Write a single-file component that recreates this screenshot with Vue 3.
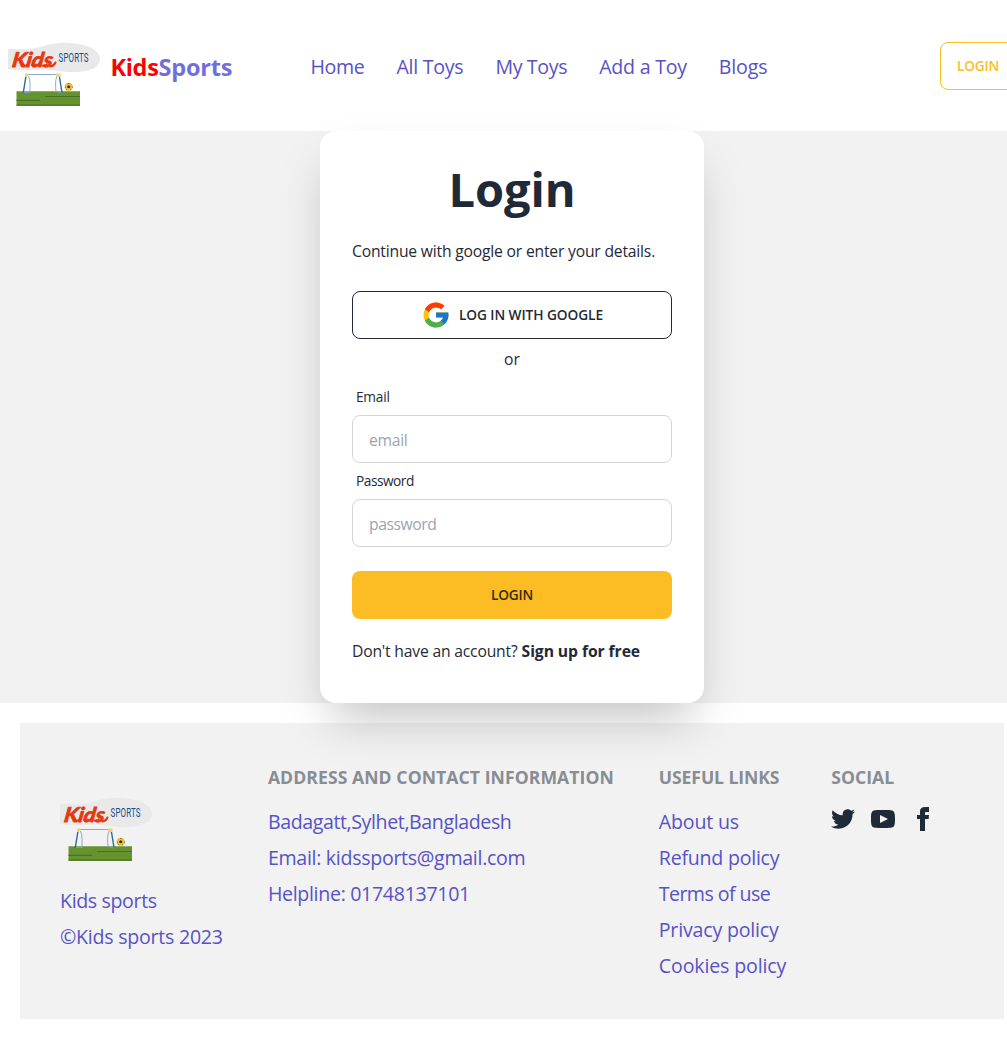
<script setup>
import { h } from 'vue'

const nav = [
  { text: 'Home', track: -0.36 },
  { text: 'All Toys', track: -0.27 },
  { text: 'My Toys', track: -0.35 },
  { text: 'Add a Toy', track: -0.25 },
  { text: 'Blogs', track: -0.15 }
]
const contact = [
  { text: 'Badagatt,Sylhet,Bangladesh', track: -0.4 },
  { text: 'Email: kidssports@gmail.com', track: -0.3 },
  { text: 'Helpline: 01748137101', track: -0.32 }
]
const links = [
  { text: 'About us', track: -0.19 },
  { text: 'Refund policy', track: -0.24 },
  { text: 'Terms of use', track: -0.57 },
  { text: 'Privacy policy', track: -0.2 },
  { text: 'Cookies policy', track: -0.14 }
]
const fields = [
  { label: 'Email', type: 'email', placeholder: 'email', labelTrack: -0.24, track: -0.294 },
  { label: 'Password', type: 'password', placeholder: 'password', labelTrack: -0.48, track: -0.421 }
]
const spacing = (n) => ({ letterSpacing: n + 'px' })

const SiteLogo = () =>
  h('svg', { width: 93, height: 65, viewBox: '0 0 93 65', style: 'display:block' }, [
    h('path', { fill: '#e9e9e9', d: 'M0 7C12 7 23 8 34 4.5C46 .5 56 0 67 1.500C80 3 92 8 92 17C92 26 81 30 66 30C51 30 45 27 33 27.500C20 28 10 29 0 27Z' }),
    h('text', { transform: 'translate(3.5 24.500) skewX(-8) scale(1.08 1)', x: 0, y: 0, fill: '#e5380f', stroke: '#e5380f', 'stroke-width': 0.8, 'stroke-linejoin': 'round', 'font-family': 'Lato, sans-serif', 'font-style': 'italic', 'font-weight': 700, 'font-size': 20.5 }, 'Kids'),
    h('path', { fill: 'none', stroke: '#e5380f', 'stroke-width': 2, 'stroke-linecap': 'round', d: 'M15 22.500Q17 25 20 22M24 23Q26 25.500 28 22.500M34.500 23.500Q37 25 39 22M42.500 24.500Q46 24 47.500 20.500' }),
    h('text', { transform: 'translate(50.5 19.600) scale(.6 1)', x: 0, y: 0, fill: '#154a8c', 'font-family': 'Roboto, sans-serif', 'font-weight': 400, 'font-size': 13.2, 'letter-spacing': 0.3 }, 'SPORTS'),
    h('path', { fill: '#659330', d: 'M8.500 49.300H72V63.700H8.500Z' }),
    h('path', { fill: 'none', stroke: '#48731f', 'stroke-width': 1.2, d: 'M37 54.500H72M8.500 58.300H32M8.500 63.200H72' }),
    h('path', { fill: 'none', stroke: '#7ba3c4', 'stroke-width': 0.9, d: 'M19 32.500H50M20.500 34C22.500 38 22 44 22 50.500H15M49 34C47 39 47.500 44 48 49.500L54 51' }),
    h('path', { fill: 'none', stroke: '#2a689f', 'stroke-width': 1.400, d: 'M18 34L15.200 51M51.300 34L54 50.500' }),
    h('path', { fill: '#ecd477', d: 'M17 31.500H20.500V33.500L18 35H17ZM48 31.500H52.500V35H51L48 33.500Z' }),
    h('circle', { cx: 60.7, cy: 44.700, r: 4, fill: '#edbd3c' }),
    h('path', { fill: '#33301f', d: 'M60.700 43.200L62.300 44.300L61.700 46.100H59.700L59.100 44.300ZM59.900 40.900H61.500V41.600H59.900ZM56.900 44L57.600 45.300L57 46.200ZM64.500 44L63.800 45.300L64.400 46.200ZM58.500 47.300L59.500 48.300L58.300 48ZM62.900 47.300L61.900 48.300L63.100 48Z' })
  ])
</script>

<template>
  <div class="page">
    <header class="navbar">
      <div class="brand">
        <SiteLogo />
        <div class="name"><span class="kids">Kids</span><span class="sports">Sports</span></div>
      </div>
      <nav>
        <a v-for="n in nav" :key="n.text" :style="spacing(n.track)">{{ n.text }}</a>
      </nav>
      <button class="btn outline-warning">Login</button>
    </header>

    <main>
      <section class="card">
        <h1>Login</h1>
        <p class="intro">Continue with google or enter your details.</p>
        <button class="btn google">
          <svg width="30" height="30" viewBox="0 0 48 48">
            <path fill="#FFC107" d="M43.611 20.083H42V20H24v8h11.303c-1.649 4.657-6.080 8-11.303 8-6.627 0-12-5.373-12-12s5.373-12 12-12c3.059 0 5.842 1.154 7.961 3.039l5.657-5.657C34.046 6.053 29.268 4 24 4 12.955 4 4 12.955 4 24s8.955 20 20 20 20-8.955 20-20c0-1.341-.138-2.650-.389-3.917z" />
            <path fill="#FF3D00" d="M6.306 14.691l6.571 4.819C14.655 15.108 18.961 12 24 12c3.059 0 5.842 1.154 7.961 3.039l5.657-5.657C34.046 6.053 29.268 4 24 4 16.318 4 9.656 8.337 6.306 14.691z" />
            <path fill="#4CAF50" d="M24 44c5.166 0 9.860-1.977 13.409-5.192l-6.190-5.238C29.211 35.091 26.715 36 24 36c-5.202 0-9.619-3.317-11.283-7.946l-6.522 5.025C9.505 39.556 16.227 44 24 44z" />
            <path fill="#1976D2" d="M43.611 20.083H42V20H24v8h11.303c-.792 2.237-2.231 4.166-4.087 5.571l6.193 5.238C36.971 39.205 44 34 44 24c0-1.341-.138-2.650-.389-3.917z" />
          </svg>
          <span>Log in with google</span>
        </button>
        <p class="or">or</p>
        <template v-for="f in fields" :key="f.label">
          <label :for="f.type" :style="spacing(f.labelTrack)">{{ f.label }}</label>
          <input :id="f.type" :type="f.type" :placeholder="f.placeholder" :style="spacing(f.track)" />
        </template>
        <button class="btn submit">Login</button>
        <p class="signup"><span>Don't have an account?</span> <b>Sign up for free</b></p>
      </section>
    </main>

    <footer>
      <div class="about">
        <SiteLogo />
        <div class="list">
          <p :style="spacing(-0.37)">Kids sports</p>
          <p :style="spacing(-0.25)">©Kids sports 2023</p>
        </div>
      </div>
      <div>
        <h2 :style="spacing(0.068)">Address and contact information</h2>
        <div class="list"><p v-for="c in contact" :key="c.text" :style="spacing(c.track)">{{ c.text }}</p></div>
      </div>
      <div>
        <h2 :style="spacing(-0.1)">Useful links</h2>
        <div class="list"><p v-for="l in links" :key="l.text" :style="spacing(l.track)">{{ l.text }}</p></div>
      </div>
      <div>
        <h2 :style="spacing(0.05)">Social</h2>
        <div class="social">
          <svg width="24" height="24" viewBox="0 0 24 24"><path d="M24 4.557c-.883.392-1.832.656-2.828.775 1.017-.609 1.798-1.574 2.165-2.724-.951.564-2.005.974-3.127 1.195-.897-.957-2.178-1.555-3.594-1.555-3.179 0-5.515 2.966-4.797 6.045-4.091-.205-7.719-2.165-10.148-5.144-1.290 2.213-.669 5.108 1.523 6.574-.806-.026-1.566-.247-2.229-.616-.054 2.281 1.581 4.415 3.949 4.890-.693.188-1.452.232-2.224.084.626 1.956 2.444 3.379 4.600 3.419-2.070 1.623-4.678 2.348-7.290 2.040 2.179 1.397 4.768 2.212 7.548 2.212 9.142 0 14.307-7.721 13.995-14.646.962-.695 1.797-1.562 2.457-2.549z" /></svg>
          <svg width="24" height="24" viewBox="0 0 24 24"><path d="M19.615 3.184c-3.604-.246-11.631-.245-15.230 0-3.897.266-4.356 2.620-4.385 8.816.029 6.185.484 8.549 4.385 8.816 3.600.245 11.626.246 15.230 0 3.897-.266 4.356-2.620 4.385-8.816-.029-6.185-.484-8.549-4.385-8.816zm-10.615 12.816v-8l8 3.993-8 4.007z" /></svg>
          <svg width="24" height="24" viewBox="0 0 24 24"><path d="M9 8h-3v4h3v12h5v-12h3.642l.358-4h-4v-1.667c0-.955.192-1.333 1.115-1.333h2.885v-5h-3.808c-3.596 0-5.192 1.583-5.192 4.615v3.385z" /></svg>
        </div>
      </div>
    </footer>
  </div>
</template>

<style>
html, body { overflow: hidden; background: #fff; }
</style>

<style scoped>
* { box-sizing: border-box; }
.page {
  width: 1024px;
  height: 1039px;
  color: #1f2937;
  font: 400 15.7px/24px "Segoe UI", "Open Sans", sans-serif;
}
p, h1, h2 { margin: 0; }
.navbar { height: 131px; padding: 0 8px; display: flex; align-items: center; }
.brand { width: 302.5px; display: flex; align-items: center; gap: 9.5px; }
.brand svg { margin-top: 18px; }
.name { font-size: 23.5px; font-weight: 700; line-height: 32px; padding-top: 2px; }
.kids { color: #ff0000; letter-spacing: -0.332px; }
.sports { color: #706fdb; letter-spacing: -0.2px; }
nav { display: flex; gap: 32px; font-size: 19.6px; line-height: 28px; color: #5752c6; padding-top: 3px; }
.btn {
  height: 48px;
  border: 1px solid transparent;
  border-radius: 8px;
  padding: 0 16px;
  display: flex;
  align-items: center;
  justify-content: center;
  font: 600 13.7px/14px "Segoe UI", "Open Sans", sans-serif;
  letter-spacing: -0.208px;
  text-transform: uppercase;
  background: none;
  color: #1f2937;
}
.outline-warning { width: 76px; margin-left: auto; border-color: #fbbd23; color: #fbbd23; }
main { height: 572px; background: #f2f2f2; display: flex; justify-content: center; }
.card {
  position: relative;
  width: 384px;
  height: 572px;
  padding: 32px;
  border-radius: 16px;
  background: #fff;
  box-shadow: 0 25px 50px -12px rgba(0, 0, 0, 0.25);
  display: flex;
  flex-direction: column;
}
h1 { font-size: 47px; line-height: 48px; letter-spacing: -0.087px; text-align: center; padding-top: 2px; }
.intro { margin: 26px 0 28px; letter-spacing: -0.2px; }
.google { border-color: #1f2937; gap: 8px; font-weight: 600; letter-spacing: -0.07px; }
.or { margin: 8px 0; text-align: center; }
label { padding: 8px 4px; font-size: 13.7px; line-height: 20px; }
input {
  height: 48px;
  border: 1px solid #d2d4d7;
  border-radius: 8px;
  padding: 2px 16px 0;
  font: inherit;
  background: #fff;
}
input::placeholder { color: #9ca3af; opacity: 1; }
.submit { margin: 24px 0 20px; background: #fbbd23; color: #382800; }
.signup span { letter-spacing: -0.196px; }
.signup b { letter-spacing: -0.08px; }
footer {
  width: 984px;
  height: 296px;
  margin: 20px 0 0 20px;
  padding: 40px;
  background: #f2f2f2;
  display: grid;
  grid-template-columns: 163px 346px 127.500px auto;
  column-gap: 44.9px;
  justify-content: start;
}
.about { padding-top: 34px; }
.about .list { margin-top: 25px; }
h2 { font-size: 17.6px; line-height: 28px; text-transform: uppercase; color: #888d94; margin-bottom: 16px; white-space: nowrap; }
h2 + .list { padding-top: 1px; }
.list { display: flex; flex-direction: column; gap: 8px; font-size: 19.6px; line-height: 28px; color: #5752c6; white-space: nowrap; }
.social { display: flex; gap: 16px; fill: #1f2937; }
</style>
